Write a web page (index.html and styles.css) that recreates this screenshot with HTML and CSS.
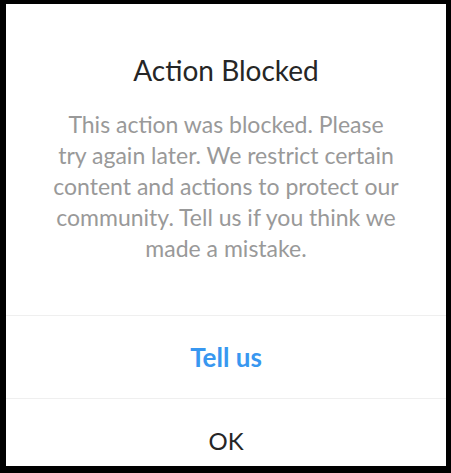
FILE: index.html
```html
<!DOCTYPE html>
<html lang="en">
<head>
<meta charset="utf-8">
<title>Action Blocked</title>
<link rel="stylesheet" href="styles.css">
</head>
<body>
<div class="dialog">
  <div class="content">
    <h1 class="title">Action Blocked</h1>
    <p class="message">This action was blocked. Please<br>try again later. We restrict certain<br>content and actions to protect our<br>community. Tell us if you think we<br>made a mistake.</p>
  </div>
  <button class="btn btn-primary">Tell us</button>
  <button class="btn btn-secondary">OK</button>
</div>
</body>
</html>
```

FILE: styles.css
```css
html, body {
  margin: 0;
  padding: 0;
  background: #000;
  height: 100%;
}
body {
  padding: 4px 5px 7px 6px;
  box-sizing: border-box;
  font-family: "Lato", "Open Sans", sans-serif;
}
.dialog {
  background: #fff;
  height: 100%;
  overflow: hidden;
  display: flex;
  flex-direction: column;
}
.content {
  padding: 49px 10px 0;
  height: 312px;
  box-sizing: border-box;
  border-bottom: 1px solid #efefef;
  text-align: center;
  flex: none;
}
.title {
  margin: 0;
  font-size: 28px;
  line-height: 34px;
  font-weight: 400;
  color: #262626;
}
.message {
  margin: 22px 0 0;
  font-size: 23px;
  line-height: 31px;
  color: #999;
}
.btn {
  flex: none;
  height: 83px;
  border: 0;
  background: #fff;
  font-family: inherit;
  font-size: 24px;
  padding: 0;
  width: 100%;
}
.btn-primary {
  color: #3897f0;
  font-size: 26px;
  font-weight: 700;
  border-bottom: 1px solid #efefef;
}
.btn-secondary {
  color: #262626;
  font-weight: 400;
}
```
